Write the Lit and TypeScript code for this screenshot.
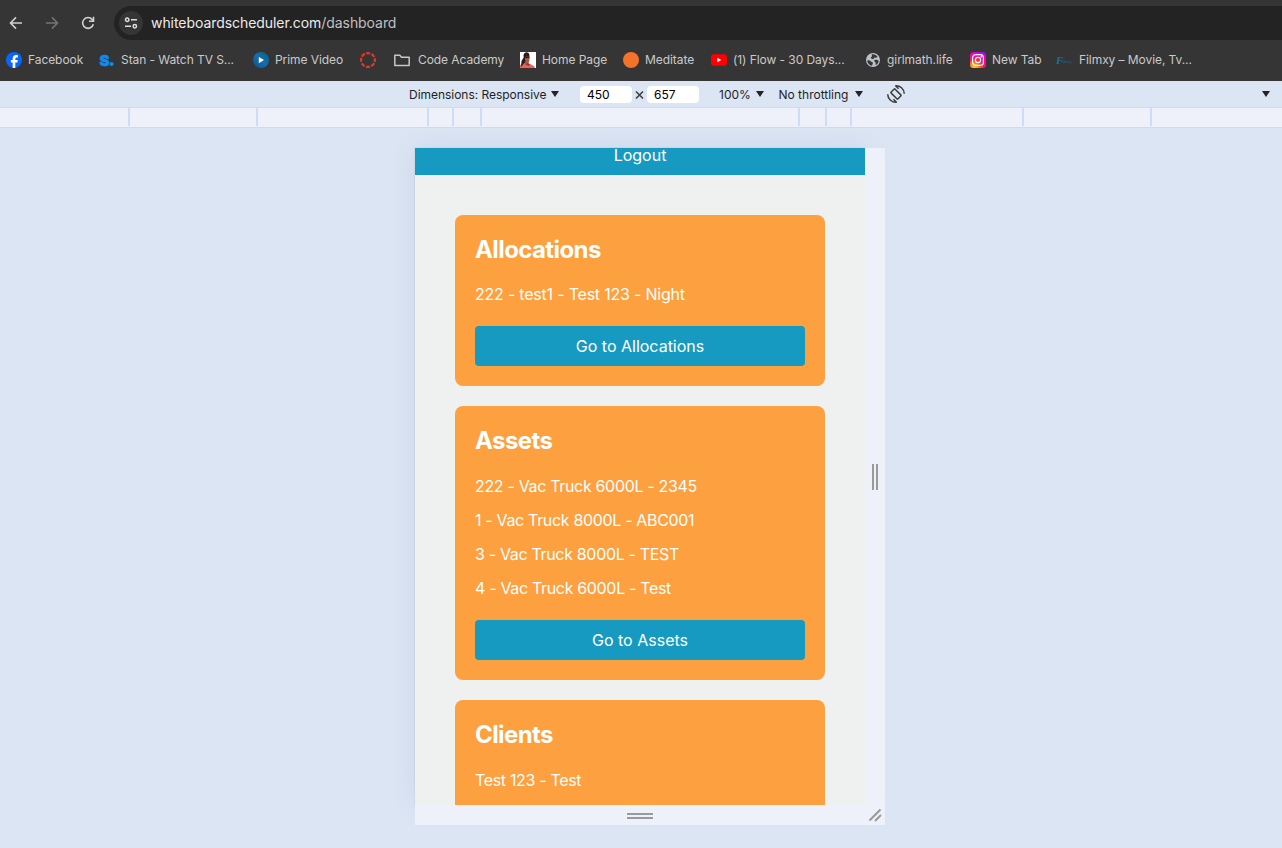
import { LitElement, html, css, svg } from "lit";
import { customElement } from "lit/decorators.js";

const icons: Record<string, unknown> = {
  facebook: svg`<circle cx="8" cy="8" r="8" fill="#0866ff"/><path d="M6.700 16v-5.400H4.900V8h1.800V6.800C6.700 4.200 7.900 3 10.300 3c.5 0 1.200.1 1.600.2v2.200h-.9C9.800 5.400 9.300 5.900 9.300 7.100V8h2.500l-.4 2.600H9.300V16z" fill="#fff"/>`,
  stan: svg`<text x="0.500" y="13.500" font-family="Inter, sans-serif" font-weight="900" font-size="15" fill="#0a8cf0" stroke="#0a8cf0" stroke-width=".6">S</text><circle cx="12.600" cy="12" r="2" fill="#0a8cf0"/>`,
  prime: svg`<defs><linearGradient id="pv" x1="0" y1="1" x2="1" y2="0"><stop offset="0" stop-color="#0f4f8c"/><stop offset=".5" stop-color="#146eb0"/><stop offset="1" stop-color="#0f5f7c"/></linearGradient></defs><circle cx="8" cy="8" r="8" fill="url(#pv)"/><path d="M5.800 5v6.200L11 8.100z" fill="#fff"/>`,
  ring: svg`<circle cx="8" cy="8" r="6.900" fill="none" stroke="#e2372b" stroke-width="2.200" stroke-dasharray="4 1.419" stroke-dashoffset="2"/>`,
  folder: svg`<path d="M.8 12.600V3.200h5l1.700 2h7.700v8.400H.8z" fill="none" stroke="#c7c7c7" stroke-width="1.500" stroke-linejoin="round"/>`,
  home: svg`<path d="M0 0h16v16H0z" fill="#fff"/><path d="M0 16v-3l4-2 6 1 4 2 1 2z" fill="#ef6257"/><path d="M3.500 4C3.500 1 5.500 0 7.500.5S10 4 9.500 7.500L8.500 12 5 13z" fill="#a65b42"/><path d="M4 5C3 2 5 .3 7 .5S9.500 3 9 4.200L6 4 5 7 5.500 10 3.500 12 1 15 1.500 9z" fill="#281c20"/><path d="M5.500 4.500h3.700v1.400H5.700z" fill="#17151b"/><path d="m7 11 3 1-1 2-3-1z" fill="#873d33"/>`,
  meditate: svg`<circle cx="8" cy="8" r="8" fill="#f4732b"/>`,
  youtube: svg`<rect y="2.200" width="16" height="11.600" rx="3" fill="#f00"/><path d="M6.300 5.700v4.600L10.400 8z" fill="#fff"/>`,
  globe: svg`<circle cx="8" cy="8" r="7" fill="#bdc1c6"/><path d="M2.200 8.500c1.500-.4 2.500-.2 3.500.7.8.8 2 .6 2.200 1.800.1.900-.7 1.300-.8 2.700-2.700-.3-4.700-2.400-4.900-5.200zM6.500 2.500c2.300-.7 4.700.3 6 2.200-.8 1-1.900 1.200-2.700.8-1 .2-.7 1.500-1.700 1.600-1 .2-1.400-.8-2.300-.7-.4-1.400 1.300-1.500 1.400-2.500zM9.300 8.200c1.200-1 3.200-.3 4.500.7-.4 1.800-1.500 3.300-3.200 4.200-.1-1.200.4-1.900-.2-2.800-.5-.7-1.400-.9-1.100-2.100z" fill="#35363a"/>`,
  instagram: svg`<defs><radialGradient id="ig" cx=".25" cy="1" r="1.150"><stop offset="0" stop-color="#ffd521"/><stop offset=".25" stop-color="#ff8a12"/><stop offset=".5" stop-color="#ff1859"/><stop offset=".75" stop-color="#f500b8"/><stop offset="1" stop-color="#8b13ff"/></radialGradient></defs><rect width="16" height="16" rx="3.500" fill="url(#ig)"/><g fill="none" stroke="#fff" stroke-width="1.200"><rect x="2.600" y="2.600" width="10.800" height="10.800" rx="3.200"/><circle cx="8" cy="8" r="2.600"/></g><circle cx="11.300" cy="4.700" r=".8" fill="#fff"/>`,
  filmxy: svg`<text x="0" y="11.500" font-family="Liberation Serif, serif" font-style="italic" font-weight="700" font-size="11" fill="#17719c">F</text><text x="6" y="11" font-family="Liberation Serif, serif" font-style="italic" font-weight="700" font-size="4.500" fill="#245a74">ilmxy</text>`,
};

const bookmarks: [string, string][] = [
  ["facebook", "Facebook"],
  ["stan", "Stan - Watch TV S..."],
  ["prime", "Prime Video"],
  ["ring", ""],
  ["folder", "Code Academy"],
  ["home", "Home Page"],
  ["meditate", "Meditate"],
  ["youtube", "(1) Flow - 30 Days..."],
  ["globe", "girlmath.life"],
  ["instagram", "New Tab"],
  ["filmxy", "Filmxy – Movie, Tv..."],
];

@customElement("browser-chrome")
class BrowserChrome extends LitElement {
  static styles = css`
    :host { display: block; height: 81px; background: #353535; overflow: hidden; font-family: Inter, sans-serif; }
    .nav { display: flex; align-items: center; height: 34px; padding-top: 6px; }
    .btn { width: 16px; height: 16px; flex: none; margin-right: 20px; }
    .back { margin-left: 8px; }
    .reload { margin-right: 18px; }
    .omni { flex: 1; height: 34px; display: flex; align-items: center; background: #232323; border-radius: 17px 0 0 17px; padding-left: 5px; }
    .chip { width: 24px; height: 24px; border-radius: 50%; background: #353535; display: grid; place-items: center; margin-right: 8px; }
    .url { font-size: 14px; color: #c0c0c0; white-space: nowrap; letter-spacing: -0.06px; padding-bottom: 2px; }
    .host { color: #ececec; }
    .marks { display: grid; grid-template-columns: 93px 154px 107px 34px 126px 103px 88px 154px 105px 86px 200px; padding-left: 6px; height: 40px; align-items: center; }
    .mark { display: flex; align-items: center; gap: 6px; font-size: 12px; color: #cacaca; white-space: nowrap; letter-spacing: -0.07px; }
    .mark svg { flex: none; }
    .mark span { padding-bottom: 2px; }
    .folder { gap: 8px; }
    .filmxy { gap: 7px; }
  `;
  render() {
    return html`
      <div class="nav">
        <svg class="btn back" viewBox="0 0 16 16" fill="none" stroke="#d0d0d0" stroke-width="1.600"><path d="M14 8H3M8 2.400 2.500 8 8 13.600"/></svg>
        <svg class="btn" viewBox="0 0 16 16" fill="none" stroke="#737373" stroke-width="1.600"><path d="M2 8h11M8 2.400 13.500 8 8 13.600"/></svg>
        <svg class="btn reload" viewBox="0 0 16 16" fill="none" stroke="#d0d0d0" stroke-width="1.600"><path d="M13.300 9.200A5.400 5.400 0 1 1 12.200 4.500L13.300 6M13.500 1.800v4.500H9"/></svg>
        <div class="omni">
          <div class="chip">
            <svg width="14" height="14" viewBox="0 0 14 14" fill="none" stroke="#dedede" stroke-width="1.500"><circle cx="3.200" cy="3.700" r="1.700"/><path d="M7 3.700h6M1 10.300h6"/><circle cx="10.800" cy="10.300" r="1.700"/></svg>
          </div>
          <div class="url"><span class="host">whiteboardscheduler.com</span>/dashboard</div>
        </div>
      </div>
      <div class="marks">
        ${bookmarks.map(([icon, label]) => html`<div class="mark ${icon}"><svg width="16" height="16" viewBox="0 0 16 16">${icons[icon]}</svg><span>${label}</span></div>`)}
      </div>
    `;
  }
}

const segments = [128, 126, 169, 23, 26, 316, 25, 23, 170, 126];

@customElement("device-toolbar")
class DeviceToolbar extends LitElement {
  static styles = css`
    :host { display: block; font-family: Inter, sans-serif; font-size: 12px; color: #1f1f1f; }
    .bar { display: flex; align-items: center; height: 26px; padding: 0 12px 0 409px; white-space: nowrap; }
    .tri { width: 8px; height: 6px; flex: none; }
    .dim { width: 142px; letter-spacing: -0.03px; }
    .field { width: 52px; height: 17px; box-sizing: border-box; border-radius: 4px; background: #fff; color: #000; line-height: 17px; padding-left: 7px; }
    .first { margin-left: 21px; }
    .by { width: 15px; height: 8px; flex: none; margin-top: 2px; }
    .zoom { margin-left: 20px; width: 37px; }
    .throttle { margin-left: 14.500px; width: 76.500px; }
    .rotate { width: 20px; height: 20px; margin-left: 23px; flex: none; }
    .more { margin-left: auto; }
    .ruler { display: flex; height: 18px; background: #eef1fa; border-top: 1px solid #ccdcf8; border-bottom: 1px solid #ccdcf8; padding-bottom: 1px; }
    .seg { flex: none; border-right: 2px solid #ccdcfa; }
  `;
  tri(cls = "") {
    return html`<svg class="tri ${cls}" viewBox="0 0 8 6"><path d="M0 0h8L4 6z" fill="#242424"/></svg>`;
  }
  render() {
    return html`
      <div class="bar">
        <span class="dim">Dimensions: Responsive</span>${this.tri()}
        <span class="field first">450</span>
        <svg class="by" viewBox="0 0 15 8"><path d="m4 .5 7 7m0-7-7 7" stroke="#3c3c3c" stroke-width="1.500"/></svg>
        <span class="field">657</span>
        <span class="zoom">100%</span>${this.tri()}
        <span class="throttle">No throttling</span>${this.tri()}
        <svg class="rotate" viewBox="0 0 20 20" fill="none" stroke="#3c3c3c" stroke-width="1.500">
          <rect x="7.200" y="5.200" width="5.600" height="9.600" rx=".8" transform="rotate(-45 10 10)"/>
          <path d="M9.200 1.700A8.300 8.300 0 0 1 18.300 9.800M12.600 4.800 9.500 1.700M10.800 18.300A8.300 8.300 0 0 1 1.700 10.200M7.400 15.200l3.100 3.100"/>
        </svg>
        ${this.tri("more")}
      </div>
      <div class="ruler">${segments.map((w) => html`<div class="seg" style="width:${w}px"></div>`)}</div>
    `;
  }
}

const cards = [
  { title: "Allocations", rows: ["222 - test1 - Test 123 - Night"] },
  { title: "Assets", rows: ["222 - Vac Truck 6000L - 2345", "1 - Vac Truck 8000L - ABC001", "3 - Vac Truck 8000L - TEST", "4 - Vac Truck 6000L - Test"] },
  { title: "Clients", rows: ["Test 123 - Test"] },
];

@customElement("dashboard-page")
class DashboardPage extends LitElement {
  static styles = css`
    :host { display: block; height: 657px; overflow: hidden; background: #eff1f0; color: #fff; font-family: Inter, sans-serif; font-size: 16px; }
    .logout { display: flex; justify-content: center; height: 27px; background: #169ac1; line-height: 14px; }
    .cards { display: flex; flex-direction: column; gap: 20px; padding: 40px; }
    .card { flex: none; background: #fda040; border-radius: 8px; padding: 20px; }
    .title { margin: 0 0 18px; font-size: 24px; font-weight: 700; line-height: 30px; height: 30px; letter-spacing: -0.600px; }
    .rows { display: flex; flex-direction: column; gap: 10px; margin-bottom: 20px; letter-spacing: -0.330px; }
    .row { line-height: 24px; height: 24px; white-space: nowrap; }
    .card:first-child .title { margin-bottom: 17px; }
    .card:first-child .rows { letter-spacing: -0.210px; }
    .go { height: 40px; border-radius: 4px; background: #169ac1; line-height: 40px; text-align: center; }
  `;
  render() {
    return html`
      <div class="logout">Logout</div>
      <div class="cards">
        ${cards.map((c) => html`<section class="card">
          <h2 class="title">${c.title}</h2>
          <div class="rows">${c.rows.map((r) => html`<div class="row">${r}</div>`)}</div>
          <div class="go">Go to ${c.title}</div>
        </section>`)}
      </div>
    `;
  }
}

@customElement("app-root")
class AppRoot extends LitElement {
  static styles = css`
    :host { display: flex; flex-direction: column; width: 1282px; height: 848px; overflow: hidden; background: #dce5f4; }
    .stage { flex: 1; padding: 20px 0 0 415px; }
    .device { display: grid; grid-template-columns: 450px 20px; grid-template-rows: 657px 20px; width: 470px; }
    .screen { box-shadow: 0 0 0 1px rgba(0,0,0,.04), 0 0 26px rgba(60,90,120,.1); min-width: 0; }
    .grip { background: #eef1fa; display: grid; place-items: center; position: relative; }
    .bottom { padding-top: 2px; }
  `;
  render() {
    return html`
      <browser-chrome></browser-chrome>
      <device-toolbar></device-toolbar>
      <div class="stage">
        <div class="device">
          <div class="screen"><dashboard-page></dashboard-page></div>
          <div class="grip"><svg width="6" height="26"><path d="M1 0v26M5 0v26" stroke="#9a9a9a" stroke-width="2"/></svg></div>
          <div class="grip bottom"><svg width="26" height="6"><path d="M0 1h26M0 5h26" stroke="#9a9a9a" stroke-width="2"/></svg></div>
          <div class="grip"><svg width="20" height="20"><path d="M4.500 15.500 15.500 4.500M10 16l6-6" stroke="#9a9a9a" stroke-width="2"/></svg></div>
        </div>
      </div>
    `;
  }
}
